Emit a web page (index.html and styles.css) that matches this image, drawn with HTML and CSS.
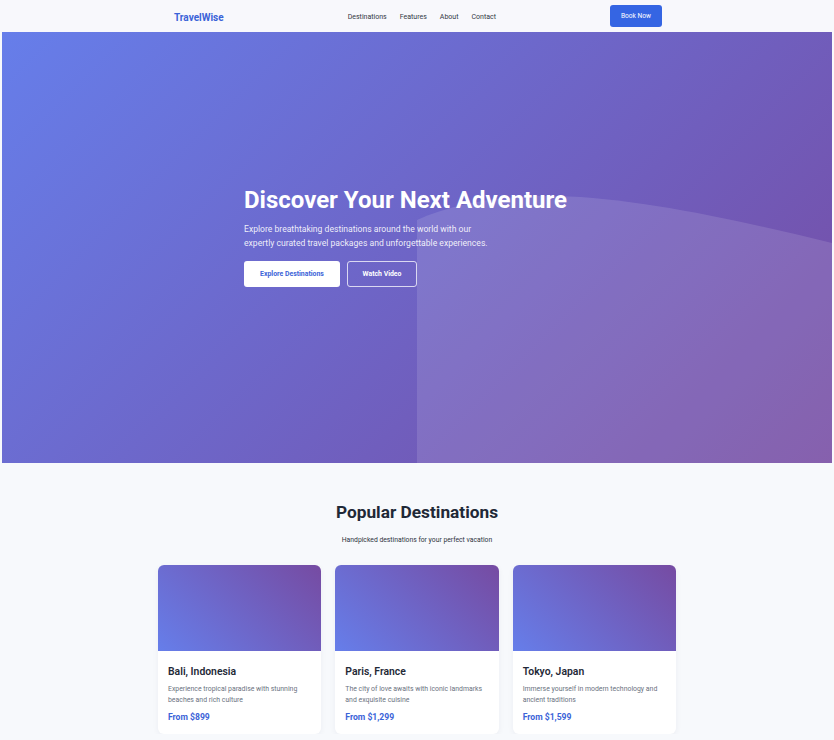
FILE: index.html
```html
<!DOCTYPE html>
<html lang="en">
<head>
<meta charset="utf-8">
<title>TravelWise</title>
<link rel="stylesheet" href="styles.css">
</head>
<body>
<header class="site-header">
  <div class="header-inner">
    <div class="logo">TravelWise</div>
    <nav class="nav">
      <a href="#">Destinations</a>
      <a href="#">Features</a>
      <a href="#">About</a>
      <a href="#">Contact</a>
    </nav>
    <a class="btn-book" href="#">Book Now</a>
  </div>
</header>

<section class="hero">
  <svg class="hero-wave" viewBox="0 0 414 431" preserveAspectRatio="none" aria-hidden="true">
    <path d="M0 188 C 40 170, 90 163, 140 164 C 220 166, 320 188, 414 211 L414 431 L0 431 Z" fill="rgba(255,255,255,0.12)"/>
  </svg>
  <div class="hero-content">
    <h1>Discover Your Next Adventure</h1>
    <p>Explore breathtaking destinations around the world with our expertly curated travel packages and unforgettable experiences.</p>
    <div class="hero-actions">
      <a class="btn-primary" href="#">Explore Destinations</a>
      <a class="btn-outline" href="#">Watch Video</a>
    </div>
  </div>
</section>

<section class="destinations">
  <h2>Popular Destinations</h2>
  <p class="section-sub">Handpicked destinations for your perfect vacation</p>
  <div class="cards">
    <article class="card">
      <div class="card-img"></div>
      <div class="card-body">
        <h3>Bali, Indonesia</h3>
        <p>Experience tropical paradise with stunning beaches and rich culture</p>
        <div class="price">From $899</div>
      </div>
    </article>
    <article class="card">
      <div class="card-img"></div>
      <div class="card-body">
        <h3>Paris, France</h3>
        <p>The city of love awaits with iconic landmarks and exquisite cuisine</p>
        <div class="price">From $1,299</div>
      </div>
    </article>
    <article class="card">
      <div class="card-img"></div>
      <div class="card-body">
        <h3>Tokyo, Japan</h3>
        <p>Immerse yourself in modern technology and ancient traditions</p>
        <div class="price">From $1,599</div>
      </div>
    </article>
  </div>
</section>
</body>
</html>
```

FILE: styles.css
```css
* { box-sizing: border-box; margin: 0; padding: 0; }

body {
  font-family: Roboto, "Liberation Sans", Arial, sans-serif;
  background: #f7f9fc;
  color: #1f2937;
  overflow: hidden;
}

a { text-decoration: none; }

.site-header {
  height: 32px;
  background: #f8f8fc;
}

.header-inner {
  width: 518px;
  height: 100%;
  margin: 0 auto;
  padding: 0 14px 0 16px;
  display: flex;
  align-items: center;
  justify-content: space-between;
}

.logo {
  font-size: 10px;
  font-weight: 700;
  color: #3b63d8;
  margin-top: 3px;
}

.nav {
  display: flex;
  gap: 13px;
  margin-left: 10px;
  margin-top: 2px;
}

.nav a {
  font-size: 7px;
  color: #333844;
}

.btn-book {
  display: flex;
  align-items: center;
  justify-content: center;
  width: 52px;
  height: 22px;
  margin-top: -1px;
  border-radius: 3px;
  background: #3565e3;
  color: #fff;
  font-size: 6.6px;
}

.hero {
  position: relative;
  height: 431px;
  margin: 0 2px;
  background: linear-gradient(135deg, #667eea 0%, #764ba2 100%);
  display: flex;
  align-items: center;
  justify-content: center;
  overflow: hidden;
}

.hero-wave {
  position: absolute;
  top: 0;
  right: 0;
  width: 50%;
  height: 100%;
}

.hero-content {
  position: relative;
  width: 346px;
  margin-top: -23px;
  color: #fff;
}

.hero h1 {
  font-size: 24px;
  font-weight: 700;
  line-height: 28px;
  margin-bottom: 8px;
}

.hero p {
  max-width: 250px;
  font-size: 8.6px;
  line-height: 14px;
  color: rgba(255, 255, 255, 0.9);
  margin-bottom: 11px;
}

.hero-actions {
  display: flex;
  gap: 7px;
}

.btn-primary,
.btn-outline {
  display: flex;
  align-items: center;
  justify-content: center;
  height: 26px;
  border-radius: 3px;
  font-size: 6.9px;
  font-weight: 700;
}

.btn-primary {
  width: 96px;
  background: #fff;
  color: #3b63d8;
}

.btn-outline {
  width: 70px;
  border: 1px solid rgba(255, 255, 255, 0.75);
  color: #fff;
}

.destinations {
  padding-top: 38px;
  text-align: center;
}

.destinations h2 {
  font-size: 17.3px;
  font-weight: 700;
  line-height: 22px;
  color: #1f2937;
}

.section-sub {
  margin-top: 13px;
  font-size: 6.8px;
  color: #2d3340;
}

.cards {
  width: 518px;
  margin: 21px auto 0;
  display: grid;
  grid-template-columns: repeat(3, 1fr);
  gap: 14px;
  text-align: left;
}

.card {
  background: #fff;
  border-radius: 6px;
  overflow: hidden;
  box-shadow: 0 2px 6px rgba(30, 40, 80, 0.05);
}

.card-img {
  height: 86px;
  background: linear-gradient(45deg, #667eea 0%, #764ba2 100%);
}

.card-body {
  padding: 14px 10px 12px;
}

.card h3 {
  font-size: 10.4px;
  font-weight: 600;
  line-height: 14px;
  color: #1f2937;
  margin-bottom: 5px;
}

.card p {
  font-size: 6.9px;
  line-height: 11px;
  color: #6b7280;
  margin-bottom: 6px;
}

.price {
  font-size: 8.6px;
  font-weight: 700;
  color: #3b63d8;
}
```
